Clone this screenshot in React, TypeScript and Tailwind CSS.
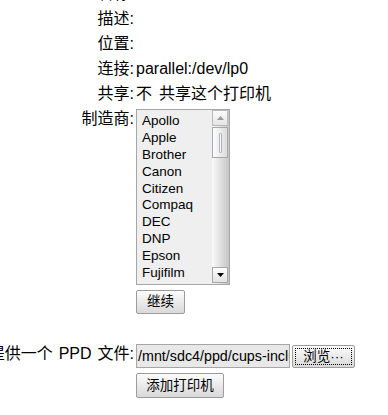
import React from "react";

const makers = ["Apollo", "Apple", "Brother", "Canon", "Citizen", "Compaq", "DEC", "DNP", "Epson", "Fujifilm"];

function Label({ children, className = "" }: { children?: React.ReactNode; className?: string }) {
  return (
    <div className={`flex justify-end whitespace-nowrap h-[25px] leading-[25px] ${className}`}>
      <span>{children}</span>
    </div>
  );
}

function Value({ children, className = "" }: { children?: React.ReactNode; className?: string }) {
  return <div className={`whitespace-nowrap h-[25px] leading-[25px] ${className}`}>{children}</div>;
}

function Btn({ children, className = "" }: { children: React.ReactNode; className?: string }) {
  return (
    <button
      type="button"
      className={`flex items-center justify-center rounded-[2px] border border-[#9c9c9c] bg-linear-to-b from-[#fcfcfc] to-[#d9d9d9] text-[13.5px] leading-none text-black ${className}`}
    >
      {children}
    </button>
  );
}

function Arrow({ up, color }: { up?: boolean; color: string }) {
  return (
    <svg width="7" height="4" viewBox="0 0 7 4">
      <path d={up ? "M0 4 L3.5 0 L7 4 Z" : "M0 0 L7 0 L3.5 4 Z"} fill={color} />
    </svg>
  );
}

function ListBox() {
  return (
    <div className="mt-[3px] flex h-[176px] w-[94px] border border-[#a6a6a6] bg-[#efefef]">
      <ul className="flex-1 overflow-hidden pl-[5px] pt-[3px] text-[13.5px]">
        {makers.map((m) => (
          <li key={m} className="h-[16.9px] leading-[16.9px]">
            {m}
          </li>
        ))}
      </ul>
      <div className="flex w-[17px] flex-col bg-linear-to-r from-[#fafafa] to-[#c6c6c6] pr-[1px]">
        <div className="flex h-[16px] items-center justify-center border border-[#b9b9b9] bg-linear-to-b from-[#fdfdfd] to-[#e4e4e4]">
          <Arrow up color="#9a9a9a" />
        </div>
        <div className="mt-[1px] flex h-[31px] items-center justify-center border border-[#a9a9a9] bg-linear-to-r from-[#fdfdfd] to-[#dcdcdc]">
          <div className="h-[20px] w-[3px] rounded-[1px] border border-[#aab4c4] bg-white" />
        </div>
        <div className="flex-1" />
        <div className="mb-[1px] flex h-[16px] items-center justify-center border border-[#a6a6a6] bg-linear-to-b from-[#fdfdfd] to-[#e2e2e2]">
          <Arrow color="#000" />
        </div>
      </div>
    </div>
  );
}

export default function App() {
  return (
    <div className="h-[415px] w-[388px] overflow-hidden bg-white text-[16px] text-black font-['Liberation_Sans','Noto_Sans_CJK_SC',sans-serif]">
      <div className="mt-[-19px] grid grid-cols-[134px_auto] gap-x-[2px]">
        <Label className="leading-[21px]">名称:</Label>
        <Value className="leading-[21px]">HP</Value>

        <Label>描述:</Label>
        <Value />

        <Label>位置:</Label>
        <Value />

        <Label>连接:</Label>
        <Value>parallel:/dev/lp0</Value>

        <Label>共享:</Label>
        <Value>
          不<span className="ml-[7px]">共享这个打印机</span>
        </Value>

        <Label className="self-start">制造商:</Label>
        <div>
          <ListBox />
        </div>

        <div />
        <div className="mt-[5px]">
          <Btn className="h-[24px] w-[49px]">继续</Btn>
        </div>

        <div className="mt-[30px] flex h-[24px] justify-end whitespace-nowrap leading-[19px]">
          <span>
            提供一个<span className="mx-[6px]">PPD</span>文件:
          </span>
        </div>
        <div className="mt-[30px] flex items-start gap-[2px]">
          <div className="h-[24px] w-[154px] overflow-hidden whitespace-nowrap border border-[#a6a6a6] bg-[#e8e8e8] pl-[1px] text-[14.3px] leading-[22px]">
            /mnt/sdc4/ppd/cups-include/model/generic.ppd
          </div>
          <Btn className="mt-[1px] h-[23px] w-[63px] p-[2px]">
            <span className="flex h-full w-full items-center justify-center border border-dotted border-black">
              浏览···
            </span>
          </Btn>
        </div>

        <div />
        <div className="mt-[5px]">
          <Btn className="h-[25px] w-[88px]">添加打印机</Btn>
        </div>
      </div>
    </div>
  );
}
